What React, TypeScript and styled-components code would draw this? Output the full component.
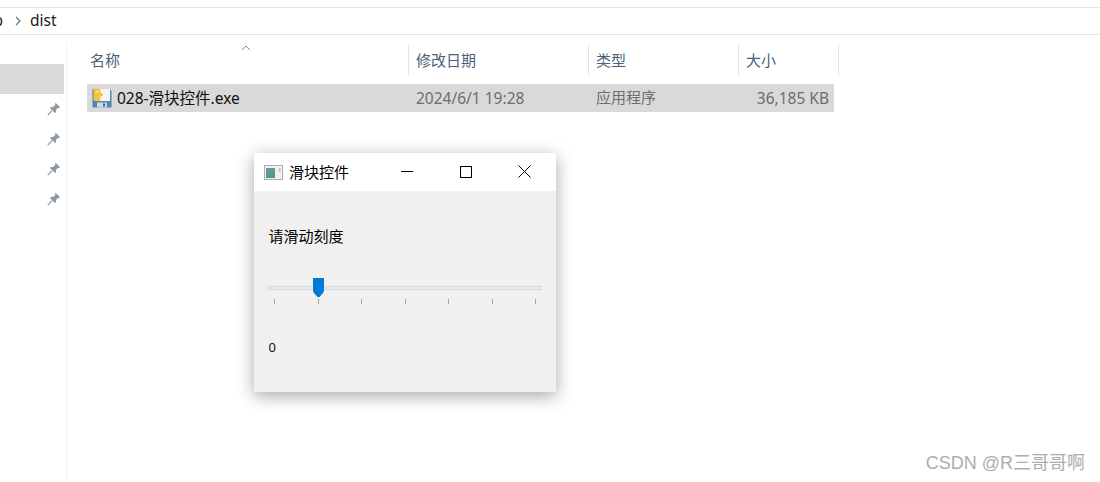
import React from "react";
import styled, { createGlobalStyle } from "styled-components";

const Global = createGlobalStyle`
  html, body { margin: 0; padding: 0; background: #fff; }
  body { font-family: "Noto Sans", "Noto Sans CJK SC", "Liberation Sans", sans-serif; }
`;

const CJK = `"Noto Sans", "Noto Sans CJK SC", sans-serif`;

const Page = styled.div`
  position: relative;
  width: 1100px;
  height: 482px;
  overflow: hidden;
  background: #fff;
  padding-top: 7px;
  box-sizing: border-box;
  display: flex;
  flex-direction: column;
`;

const AddressBar = styled.div`
  height: 28px;
  box-sizing: border-box;
  border-top: 1px solid #e3e3e3;
  border-bottom: 1px solid #e3e3e3;
  display: flex;
  align-items: center;
  font: 15.5px ${CJK};
  color: #1a1a1a;
  padding-bottom: 2px;
`;

const Crumb = styled.span`
  margin-left: -6px;
  width: 9px;
  overflow: hidden;
  direction: rtl;
`;

const Chevron = styled.svg`
  width: 8px;
  height: 10px;
  margin: 2px 8px 0 11px;
`;

const Main = styled.div`
  flex: 1;
  display: flex;
  min-height: 0;
`;

const Sidebar = styled.aside`
  width: 67px;
  box-sizing: border-box;
  border-right: 1px solid #f2f2f2;
  padding-top: 29px;
  margin-top: 8px;
  display: flex;
  flex-direction: column;
  align-items: flex-end;
`;

const SelectedNav = styled.div`
  align-self: flex-start;
  width: 64px;
  height: 30px;
  margin-top: -8px;
  background: #d9d9d9;
`;

const PinRow = styled.div`
  width: 100%;
  height: 30px;
  display: flex;
  align-items: center;
  justify-content: flex-end;
  padding-right: 5px;
  box-sizing: border-box;
`;

const Files = styled.section`
  flex: 1;
  padding: 9px 0 0 20px;
  position: relative;
`;

const Columns = styled.div`
  display: grid;
  grid-template-columns: 322px 180px 150px 100px;
  height: 32px;
  width: 752px;
`;

const ColHead = styled.div<{ $first?: boolean }>`
  font: 15px ${CJK};
  color: #4c607a;
  border-right: 1px solid #e5e5e5;
  display: flex;
  align-items: center;
  padding-left: ${(p) => (p.$first ? "3px" : "7px")};
  padding-bottom: 2px;
  box-sizing: border-box;
  white-space: nowrap;
`;

const SortCaret = styled.svg`
  position: absolute;
  left: 174px;
  top: 10px;
  width: 10px;
  height: 6px;
`;

const FileRow = styled.div`
  display: grid;
  grid-template-columns: 322px 180px 150px 95px;
  width: 747px;
  height: 28px;
  margin-top: 8px;
  background: #d9d9d9;
  align-items: center;
  font: 15.5px ${CJK};
  color: #6d6d6d;
`;

const NameCell = styled.div`
  display: flex;
  align-items: center;
  gap: 5px;
  padding-left: 5px;
  color: #111;
`;

const FileName = styled.span`
  position: relative;
  top: -1px;
`;

const Cell = styled.div<{ $right?: boolean; $narrow?: boolean }>`
  padding-left: ${(p) => (p.$right ? "0" : "7px")};
  padding-right: ${(p) => (p.$right ? "5px" : "0")};
  padding-bottom: ${(p) => (p.$narrow ? "3px" : "1px")};
  text-align: ${(p) => (p.$right ? "right" : "left")};
  font-size: ${(p) => (p.$narrow ? "15px" : "inherit")};
  white-space: nowrap;
`;

const Window = styled.div`
  position: absolute;
  left: 254px;
  top: 153px;
  width: 302px;
  height: 239px;
  display: flex;
  flex-direction: column;
  background: #f0f0f0;
  box-shadow: 0 4px 16px rgba(0, 0, 0, 0.35);
`;

const TitleBar = styled.div`
  height: 38px;
  background: #fff;
  display: flex;
  align-items: center;
  padding-left: 10px;
  font: 15px ${CJK};
  color: #000;
`;

const TitleText = styled.span`
  margin-left: 6px;
  flex: 1;
  padding-bottom: 2px;
`;

const WinControls = styled.div`
  display: flex;
  align-items: center;
  width: 176px;
  margin-right: 2px;
  padding-bottom: 1px;
`;

const WinButton = styled.div`
  width: 58.5px;
  display: flex;
  justify-content: center;
  align-items: center;
`;

const Body = styled.div`
  flex: 1;
  display: flex;
  flex-direction: column;
  padding: 35px 14px 0;
`;

const Label = styled.div`
  font: 15px/20px ${CJK};
  color: #000;
  padding-left: 0.5px;
`;

const Slider = styled.div`
  margin-top: 32px;
  position: relative;
  height: 20px;
`;

const Groove = styled.div`
  position: absolute;
  left: 0;
  right: 0;
  top: 8px;
  height: 4px;
  box-sizing: border-box;
  background: #e7eaea;
  border: 1px solid #d6d9d9;
`;

const Thumb = styled.svg`
  position: absolute;
  left: 45px;
  top: 0;
  width: 11px;
  height: 19px;
`;

const Ticks = styled.div`
  display: flex;
  justify-content: space-between;
  padding: 0 6px;
  margin-top: 1px;
`;

const Tick = styled.div`
  width: 1px;
  height: 5px;
  background: #a8a898;
`;

const Value = styled.div`
  margin-top: 34px;
  padding-left: 0.5px;
  font: 13px/18px "Noto Sans", sans-serif;
  color: #111;
`;

const Watermark = styled.div`
  position: absolute;
  right: 15px;
  top: 452px;
  font: 18px/22px "Liberation Sans", "Noto Sans CJK SC", sans-serif;
  color: #adadad;
  white-space: nowrap;
`;

const Pin = () => (
  <svg width="14" height="14" viewBox="0 0 14 14">
    <path d="M8.6 0.8 L13.2 5.2 L11.8 6.1 L11.2 5.7 L8.9 8 L9 10.3 L8 11 L3 6 L3.8 5 L6.1 5.1 L8.4 2.8 L8 2.2 Z" fill="#8c99a3" />
    <path d="M5 8.7 L0.8 13.2" stroke="#8c99a3" strokeWidth="1.2" />
  </svg>
);

const FileIcon = () => (
  <svg width="20" height="20" viewBox="0 0 20 20">
    <path d="M0.5 1 H17.5 L19.5 3 V19.5 H0.5 Z" fill="#4f86b5" />
    <rect x="4" y="1" width="14" height="12" fill="#f4f4f0" />
    <rect x="5" y="14.5" width="10" height="5" fill="#cfd6dc" />
    <rect x="11" y="15.5" width="2" height="3" fill="#3d6e99" />
    <path d="M1.5 0.5 H7 Q8.5 0.5 8.5 2 V5 H10.5 V8 H8.5 V11 Q8.5 13 6.5 13 H3.5 Q1.5 13 1.5 11 Z" fill="#f2c63c" />
    <rect x="4.6" y="2.6" width="1.8" height="1.8" fill="#fff4b8" />
  </svg>
);

const AppIcon = () => (
  <svg width="19" height="15" viewBox="0 0 19 15">
    <defs>
      <linearGradient id="ag" x1="0" y1="0" x2="0.6" y2="1">
        <stop offset="0" stopColor="#6d93b5" />
        <stop offset="1" stopColor="#4f9f70" />
      </linearGradient>
    </defs>
    <rect x="0.5" y="0.5" width="18" height="14" fill="#f1f1f1" stroke="#adadad" />
    <rect x="2" y="3" width="9" height="10" fill="url(#ag)" />
    <rect x="15" y="3" width="1.5" height="4" fill="#a9c4cc" />
  </svg>
);

const ticks = [0, 1, 2, 3, 4, 5, 6];

export default function App() {
  return (
    <Page>
      <Global />
      <AddressBar>
        <Crumb>p</Crumb>
        <Chevron viewBox="0 0 8 10">
          <path d="M2 1 L6 5 L2 9" fill="none" stroke="#7a7a7a" strokeWidth="1.4" />
        </Chevron>
        <span>dist</span>
      </AddressBar>
      <Main>
        <Sidebar>
          <SelectedNav />
          <PinRow><Pin /></PinRow>
          <PinRow><Pin /></PinRow>
          <PinRow><Pin /></PinRow>
          <PinRow><Pin /></PinRow>
        </Sidebar>
        <Files>
          <SortCaret viewBox="0 0 10 6">
            <path d="M1 5 L5 1 L9 5" fill="none" stroke="#8a8a8a" strokeWidth="1" />
          </SortCaret>
          <Columns>
            <ColHead $first>名称</ColHead>
            <ColHead>修改日期</ColHead>
            <ColHead>类型</ColHead>
            <ColHead>大小</ColHead>
          </Columns>
          <FileRow>
            <NameCell>
              <FileIcon />
              <FileName>028-滑块控件.exe</FileName>
            </NameCell>
            <Cell>2024/6/1 19:28</Cell>
            <Cell $narrow>应用程序</Cell>
            <Cell $right>36,185 KB</Cell>
          </FileRow>
        </Files>
      </Main>
      <Window>
        <TitleBar>
          <AppIcon />
          <TitleText>滑块控件</TitleText>
          <WinControls>
            <WinButton>
              <svg width="12" height="12" viewBox="0 0 12 12">
                <path d="M0 5.5 H12" stroke="#000" strokeWidth="1" />
              </svg>
            </WinButton>
            <WinButton>
              <svg width="12" height="12" viewBox="0 0 12 12">
                <rect x="0.5" y="0.5" width="11" height="11" fill="none" stroke="#000" strokeWidth="1" />
              </svg>
            </WinButton>
            <WinButton>
              <svg width="13" height="13" viewBox="0 0 13 13">
                <path d="M0.5 0.5 L12.5 12.5 M12.5 0.5 L0.5 12.5" stroke="#000" strokeWidth="1" />
              </svg>
            </WinButton>
          </WinControls>
        </TitleBar>
        <Body>
          <Label>请滑动刻度</Label>
          <Slider>
            <Groove />
            <Thumb viewBox="0 0 11 19">
              <path d="M0 0 H11 V12 Q11 14 9.5 15.5 L6.5 19 H4.5 L1.5 15.5 Q0 14 0 12 Z" fill="#0078d7" />
            </Thumb>
          </Slider>
          <Ticks>
            {ticks.map((t) => (
              <Tick key={t} />
            ))}
          </Ticks>
          <Value>0</Value>
        </Body>
      </Window>
      <Watermark>CSDN @R三哥哥啊</Watermark>
    </Page>
  );
}
